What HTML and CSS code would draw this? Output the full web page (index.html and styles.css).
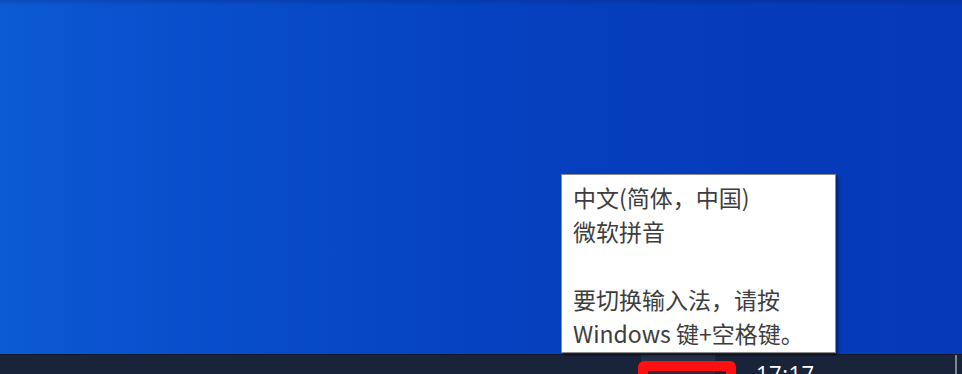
FILE: index.html
```html
<!DOCTYPE html>
<html lang="zh-CN">
<head>
<meta charset="utf-8">
<title>桌面</title>
<link rel="stylesheet" href="styles.css">
</head>
<body>
<div class="screen">
  <div class="desktop">
    <div class="tooltip">
      <div class="tip-line">中文(简体，中国)</div>
      <div class="tip-line">微软拼音</div>
      <div class="tip-line tip-blank"></div>
      <div class="tip-line">要切换输入法，请按</div>
      <div class="tip-line">Windows 键+空格键。</div>
    </div>
  </div>
  <div class="taskbar">
    <div class="spacer"></div>
    <div class="task-btn">
      <div class="highlight-box"></div>
    </div>
    <div class="clock">17:17</div>
    <div class="notify"></div>
    <div class="show-desk"></div>
  </div>
</div>
</body>
</html>
```

FILE: styles.css
```css
html, body {
  margin: 0;
  padding: 0;
  width: 962px;
  height: 374px;
  overflow: hidden;
  background: #19243a;
}

.screen {
  display: flex;
  flex-direction: column;
  width: 962px;
  height: 374px;
  overflow: hidden;
}

.desktop {
  position: relative;
  height: 354px;
  flex: none;
  background:
    linear-gradient(180deg, rgba(0, 20, 80, 0.18) 0px, rgba(0, 20, 80, 0) 6px),
    linear-gradient(90deg, #0c5ad4 0%, #0a52cf 12%, #074ac8 30%, #0540bf 55%, #053bba 80%, #0539b8 100%);
}

.tooltip {
  position: absolute;
  left: 561px;
  top: 174px;
  width: 275px;
  height: 179px;
  box-sizing: border-box;
  padding: 5px 11px 2px 11px;
  background: #ffffff;
  border: 1px solid #8c8c8c;
  box-shadow: 2px 2px 3px rgba(0, 0, 0, 0.45);
  font-family: "Noto Sans CJK SC", "Noto Sans", sans-serif;
  font-size: 23px;
  line-height: 34px;
  color: #3d3d3d;
  white-space: nowrap;
  z-index: 2;
}

.tip-line {
  height: 34px;
}

.taskbar {
  display: flex;
  align-items: stretch;
  height: 60px;
  flex: none;
  background: #19243a;
  border-top: 1px solid #111a2c;
  box-sizing: border-box;
}

.spacer {
  flex: 1;
}

.task-btn {
  position: relative;
  width: 74px;
  background: #26324a;
}

.highlight-box {
  position: absolute;
  left: -3px;
  top: 6px;
  width: 98px;
  height: 50px;
  box-sizing: border-box;
  border: 10px solid #ff1010;
  border-radius: 6px;
  background: rgba(80, 20, 20, 0.35);
}

.clock {
  width: 60px;
  margin-left: 41px;
  padding-top: 6px;
  font-family: "Open Sans", "Noto Sans", sans-serif;
  font-size: 22px;
  line-height: 24px;
  letter-spacing: 0.5px;
  color: #ffffff;
  white-space: nowrap;
}

.notify {
  width: 139px;
}

.show-desk {
  width: 3px;
  margin-right: 2px;
  border-left: 2px solid #7d8592;
}
```
